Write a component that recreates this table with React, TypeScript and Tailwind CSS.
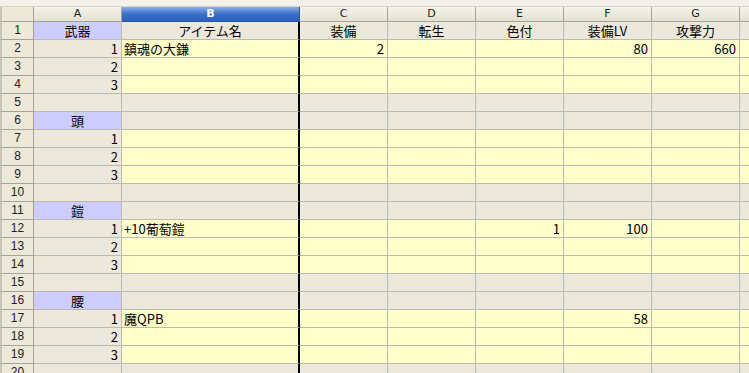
import React from "react";

type Cell = { v?: string; bg?: "g" | "y" | "l"; align?: "r" | "c" | "l" };

const COLS = ["A", "B", "C", "D", "E", "F", "G", "H"];
const HEAD = ["武器", "アイテム名", "装備", "転生", "色付", "装備LV", "攻撃力", ""];

const sections = [
  { label: "武器", items: [["鎮魂の大鎌", "2", "", "", "80", "660"], [], []] },
  { label: "頭", items: [[], [], []] },
  { label: "鎧", items: [["+10葡萄鎧", "", "", "1", "100", ""], [], []] },
  { label: "腰", items: [["魔QPB", "", "", "", "58", ""], [], []] },
];

function buildRows(): Cell[][] {
  const rows: Cell[][] = [];
  const gray = (): Cell[] => COLS.map(() => ({ bg: "g" }));
  sections.forEach((s, si) => {
    if (si === 0) {
      rows.push(
        HEAD.map((h, i) => ({ v: h, bg: i === 0 ? "l" : "g", align: "c" }))
      );
    } else {
      const r = gray();
      r[0] = { v: s.label, bg: "l", align: "c" };
      rows.push(r);
    }
    s.items.forEach((it, n) => {
      const r: Cell[] = [{ v: String(n + 1), bg: "g", align: "r" }];
      for (let c = 1; c < COLS.length; c++) {
        const v = (it as string[])[c - 1] || "";
        r.push({ v, bg: "y", align: c === 1 ? "l" : "r" });
      }
      rows.push(r);
    });
    rows.push(gray());
  });
  return rows;
}

const bgClass = {
  g: "bg-[#ece9dc]",
  y: "bg-[#ffffcc]",
  l: "bg-[#ccccff]",
};

export default function App() {
  const rows = buildRows();
  const grid =
    "grid grid-cols-[34px_88px_178px_88px_88px_88px_88px_88px_88px]";

  return (
    <div className="w-[749px] h-[373px] overflow-hidden bg-[#f1efe3] font-['Noto_Sans_CJK_JP','Liberation_Sans',sans-serif] text-[13px] text-black">
      <div className="h-[7px] bg-[#f3f2ea] border-b border-[#d6d3c4]" />
      {/* column letters */}
      <div className={`${grid} h-[15px]`}>
        <div className="box-border border-l-2 border-[#c8c5b6] border-r border-b border-r-[#a6a396] border-b-[#a6a396] bg-[#ece9d8]" />
        {COLS.map((c) =>
          c === "B" ? (
            <div
              key={c}
              className="box-border border-r border-b border-[#2a55a8] bg-gradient-to-b from-[#8fb0ea] via-[#3a6fcb] to-[#2d5fbd] text-white text-[11px] leading-[14px] text-center font-['DejaVu_Sans',sans-serif] font-bold"
            >
              {c}
            </div>
          ) : (
            <div
              key={c}
              className="box-border border-r border-b border-[#a6a396] bg-gradient-to-b from-[#f4f3ec] to-[#e4e1d2] text-[11px] leading-[14px] text-center font-['DejaVu_Sans',sans-serif] text-[#222]"
            >
              {c === "H" ? "" : c}
            </div>
          )
        )}
      </div>
      {rows.map((r, ri) => (
        <div key={ri} className={`${grid} h-[18px]`}>
          <div className="box-border border-l-2 border-[#c8c5b6] border-r border-b border-r-[#a6a396] border-b-[#a6a396] bg-[#ece9d8] text-center text-[12px] leading-[17px] font-['Liberation_Sans',sans-serif] text-[#222]">
            {ri + 1}
          </div>
          {r.map((c, ci) => (
            <div
              key={ci}
              className={`box-border border-b border-[#bdbab0] whitespace-nowrap overflow-hidden leading-[17px] ${
                ci === 1 ? "border-r-2 border-r-black" : "border-r"
              } ${bgClass[c.bg || "g"]} ${
                c.align === "r"
                  ? "text-right pr-[3px]"
                  : c.align === "c"
                  ? "text-center"
                  : "text-left pl-[2px]"
              }`}
            >
              {c.v}
            </div>
          ))}
        </div>
      ))}
    </div>
  );
}
